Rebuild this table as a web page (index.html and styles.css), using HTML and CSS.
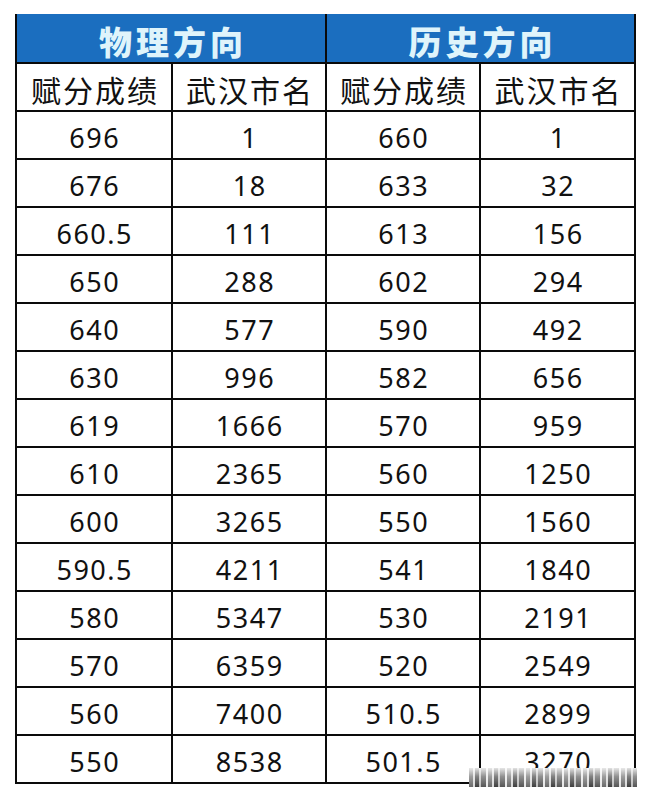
FILE: index.html
```html
<!DOCTYPE html>
<html lang="zh">
<head>
<meta charset="utf-8">
<title>赋分成绩 武汉市名</title>
<link rel="stylesheet" href="styles.css">
</head>
<body>
<div class="page">
  <div class="table">
    <div class="cell title span2">物理方向</div>
    <div class="cell title span2">历史方向</div>
    <div class="cell head">赋分成绩</div>
    <div class="cell head">武汉市名</div>
    <div class="cell head">赋分成绩</div>
    <div class="cell head">武汉市名</div>

    <div class="cell num">696</div><div class="cell num">1</div><div class="cell num">660</div><div class="cell num">1</div>
    <div class="cell num">676</div><div class="cell num">18</div><div class="cell num">633</div><div class="cell num">32</div>
    <div class="cell num">660.5</div><div class="cell num">111</div><div class="cell num">613</div><div class="cell num">156</div>
    <div class="cell num">650</div><div class="cell num">288</div><div class="cell num">602</div><div class="cell num">294</div>
    <div class="cell num">640</div><div class="cell num">577</div><div class="cell num">590</div><div class="cell num">492</div>
    <div class="cell num">630</div><div class="cell num">996</div><div class="cell num">582</div><div class="cell num">656</div>
    <div class="cell num">619</div><div class="cell num">1666</div><div class="cell num">570</div><div class="cell num">959</div>
    <div class="cell num">610</div><div class="cell num">2365</div><div class="cell num">560</div><div class="cell num">1250</div>
    <div class="cell num">600</div><div class="cell num">3265</div><div class="cell num">550</div><div class="cell num">1560</div>
    <div class="cell num">590.5</div><div class="cell num">4211</div><div class="cell num">541</div><div class="cell num">1840</div>
    <div class="cell num">580</div><div class="cell num">5347</div><div class="cell num">530</div><div class="cell num">2191</div>
    <div class="cell num">570</div><div class="cell num">6359</div><div class="cell num">520</div><div class="cell num">2549</div>
    <div class="cell num">560</div><div class="cell num">7400</div><div class="cell num">510.5</div><div class="cell num">2899</div>
    <div class="cell num">550</div><div class="cell num">8538</div><div class="cell num">501.5</div><div class="cell num">3270</div>
  </div>
  <div class="stamp"></div>
</div>
</body>
</html>
```

FILE: styles.css
```css
html, body {
  margin: 0;
  padding: 0;
  background: #ffffff;
}

.page {
  position: relative;
  width: 652px;
  height: 801px;
  padding: 14px 0 0 15px;
  box-sizing: border-box;
}

.table {
  display: grid;
  grid-template-columns: 154px 152px 152px 153px;
  grid-template-rows: 48px repeat(15, 46px);
  gap: 2px;
  padding: 0 2px 2px 2px;
  width: 621px;
  box-sizing: border-box;
  background: #0a0a0a;
}

.cell {
  background: #ffffff;
  display: flex;
  align-items: center;
  justify-content: center;
  color: #111111;
  box-sizing: border-box;
  min-width: 0;
  min-height: 0;
}

.span2 {
  grid-column: span 2;
}

.title {
  background: #1b6ebf;
  color: #dff4fb;
  font-family: "Noto Sans CJK SC", sans-serif;
  font-weight: 900;
  font-size: 33px;
  letter-spacing: 4px;
  padding: 6px 0 0 4px;
  line-height: 36px;
}

.head {
  font-family: "Noto Sans CJK SC", sans-serif;
  font-size: 30px;
  letter-spacing: 2px;
  padding: 3px 0 0 2px;
  line-height: 34px;
}

.num {
  font-family: "Noto Sans", sans-serif;
  font-size: 27px;
  letter-spacing: 1.5px;
  padding: 6px 0 0 1.5px;
  line-height: 30px;
}

.stamp {
  position: absolute;
  left: 469px;
  top: 768px;
  width: 168px;
  height: 19px;
  background:
    linear-gradient(to bottom, rgba(255,255,255,0.85) 0%, rgba(255,255,255,0.35) 45%, rgba(255,255,255,0) 100%),
    repeating-linear-gradient(90deg, #6a6a6a 0 4px, #d8d8d8 4px 6px, #3e3e3e 6px 10px, #bdbdbd 10px 12px, #555555 12px 17px, #e6e6e6 17px 19px);
}
```
